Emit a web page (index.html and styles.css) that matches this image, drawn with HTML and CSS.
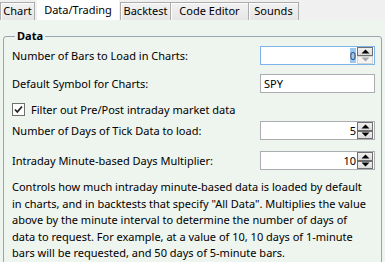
FILE: index.html
```html
<!DOCTYPE html>
<html lang="en">
<head>
  <meta charset="UTF-8" />
  <title>Settings - Data/Trading</title>
  <link rel="stylesheet" href="styles.css">
</head>
<body>
  <div class="tabs">
    <div class="tab tab-chart">Chart</div>
    <div class="tab active tab-data">Data/Trading</div>
    <div class="tab tab-backtest">Backtest</div>
    <div class="tab tab-code">Code Editor</div>
    <div class="tab tab-sounds">Sounds</div>
  </div>
  <div class="panel">
    <fieldset class="group">
      <legend>Data</legend>

      <div class="row">
        <span>Number of Bars to Load in Charts:</span>
        <div class="spin focused">
          <div class="spin-value"><span class="sel">0</span></div>
          <div class="spin-btns">
            <div class="spin-btn up"><svg width="9" height="5" viewBox="0 0 9 5"><path d="M0.5 4.5 L4.5 0.5 L8.5 4.5 Z" fill="#000"/></svg></div>
            <div class="spin-btn down disabled"><svg width="9" height="5" viewBox="0 0 9 5"><path d="M0.5 0.5 L4.5 4.5 L8.5 0.5 Z" fill="#a6a6a6"/></svg></div>
          </div>
        </div>
      </div>

      <div class="row">
        <span>Default Symbol for Charts:</span>
        <div class="textbox">SPY</div>
      </div>

      <label class="check-row">
        <span class="checkbox"><svg width="11" height="11" viewBox="0 0 11 11"><path d="M2 5.5 L4.3 8 L9 2.5" fill="none" stroke="#222" stroke-width="1.8"/></svg></span>
        <span>Filter out Pre/Post intraday market data</span>
      </label>

      <div class="row row-tick">
        <span>Number of Days of Tick Data to load:</span>
        <div class="spin">
          <div class="spin-value">5</div>
          <div class="spin-btns">
            <div class="spin-btn up"><svg width="9" height="5" viewBox="0 0 9 5"><path d="M0.5 4.5 L4.5 0.5 L8.5 4.5 Z" fill="#000"/></svg></div>
            <div class="spin-btn down"><svg width="9" height="5" viewBox="0 0 9 5"><path d="M0.5 0.5 L4.5 4.5 L8.5 0.5 Z" fill="#000"/></svg></div>
          </div>
        </div>
      </div>

      <div class="row">
        <span>Intraday Minute-based Days Multiplier:</span>
        <div class="spin">
          <div class="spin-value">10</div>
          <div class="spin-btns">
            <div class="spin-btn up"><svg width="9" height="5" viewBox="0 0 9 5"><path d="M0.5 4.5 L4.5 0.5 L8.5 4.5 Z" fill="#000"/></svg></div>
            <div class="spin-btn down"><svg width="9" height="5" viewBox="0 0 9 5"><path d="M0.5 0.5 L4.5 4.5 L8.5 0.5 Z" fill="#000"/></svg></div>
          </div>
        </div>
      </div>

      <p class="note">Controls how much intraday minute-based data is loaded by default<br>
        in charts, and in backtests that specify "All Data". Multiplies the value<br>
        above by the minute interval to determine the number of days of<br>
        data to request. For example, at a value of 10, 10 days of 1-minute<br>
        bars will be requested, and 50 days of 5-minute bars.</p>
    </fieldset>
  </div>
</body>
</html>
```

FILE: styles.css
```css
body {
  margin: 0;
  width: 385px;
  height: 262px;
  overflow: hidden;
  font-family: 'Noto Sans', 'Open Sans', sans-serif;
  font-size: 11px;
  color: #000;
  background: #f0f0f0;
}
.tabs {
  display: flex;
  align-items: flex-end;
  height: 20px;
}
.tab {
  box-sizing: border-box;
  height: 18px;
  line-height: 16px;
  text-align: center;
  border: 1px solid #acacac;
  border-bottom: none;
  background: linear-gradient(#f2f2f2, #e6e6e6);
  box-shadow: inset 1px 1px 0 #fcfcfc;
}
.tab-chart { width: 35px; margin-right: 2px; }
.tab-data { width: 82px; }
.tab-backtest { width: 51px; margin-left: 1px; }
.tab-code { width: 78px; border-left: none; }
.tab-sounds { width: 50px; border-left: none; }
.tab.active {
  height: 20px;
  line-height: 19px;
  background: #fff;
  border: none;
  box-shadow: none;
}
.panel {
  height: 242px;
  background: #eef4ee;
  padding-top: 9px;
  box-sizing: border-box;
}
.group {
  margin: 0 3px;
  padding: 3px 6px 0 8px;
  border: 1px solid #98a3b3;
  border-radius: 3px;
  height: 300px;
}
.group legend {
  font-weight: bold;
  padding: 0 2px;
  margin-left: 3px;
  line-height: 14px;
}
.row {
  display: flex;
  justify-content: space-between;
  align-items: center;
  height: 19px;
  margin-bottom: 9px;
}
.textbox, .spin {
  box-sizing: border-box;
  width: 115px;
  height: 19px;
  background: #fff;
  border: 1px solid #abadb3;
}
.textbox {
  padding-left: 3px;
  line-height: 17px;
}
.spin {
  display: flex;
}
.spin.focused {
  border-color: #7eb4ea;
}
.spin-value {
  flex: 1;
  text-align: right;
  line-height: 17px;
  padding-right: 1px;
}
.sel {
  background: #99c9ef;
  color: #1f4e8c;
}
.spin-btns {
  display: flex;
  flex-direction: column;
  width: 16px;
  padding: 0 1px 0 0;
}
.spin-btn {
  box-sizing: border-box;
  flex: 1;
  display: flex;
  align-items: center;
  justify-content: center;
  border: 1px solid #707070;
  background: linear-gradient(#f0f0f0, #dcdcdc);
}
.spin-btn.disabled {
  border-color: #d4d4d4;
  background: #f4f4f4;
}
.check-row {
  display: flex;
  align-items: center;
  gap: 6px;
  height: 16px;
  margin: -1px 0 4px;
}
.checkbox {
  box-sizing: border-box;
  width: 13px;
  height: 13px;
  border: 1px solid #707070;
  background: #fff;
  display: flex;
  align-items: center;
  justify-content: center;
}
.row-tick {
  margin-bottom: 11px;
}
.note {
  margin: 8px 0 0;
  line-height: 16.5px;
  white-space: nowrap;
}
```
